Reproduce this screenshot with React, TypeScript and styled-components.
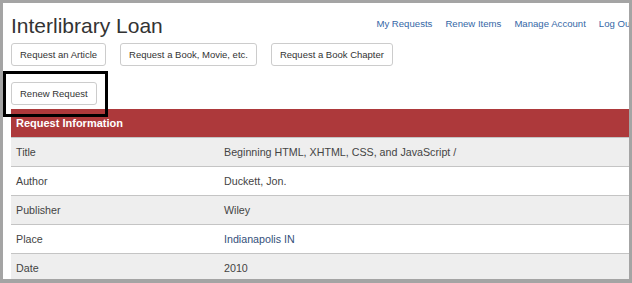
import React from 'react';
import styled, { createGlobalStyle } from 'styled-components';

const GlobalStyle = createGlobalStyle`
  html, body {
    margin: 0;
    padding: 0;
    background: #a4a4a4;
  }
  body {
    font-family: "Liberation Sans", Arial, sans-serif;
  }
`;

const Frame = styled.div`
  position: relative;
  margin: 3px 0 0 3px;
  width: 626px;
  height: 276px;
  background: #fff;
  overflow: hidden;
`;

const Page = styled.div`
  box-sizing: border-box;
  width: 650px;
  padding: 11px 12px 0 8px;
`;

const TopBar = styled.div`
  display: flex;
  align-items: flex-start;
  justify-content: space-between;
`;

const Title = styled.h1`
  margin: 0;
  font-size: 21px;
  line-height: 24px;
  font-weight: normal;
  color: #333;
`;

const Nav = styled.nav`
  display: flex;
  gap: 13px;
  margin-top: 4px;
  margin-right: 8px;
`;

const NavLink = styled.a`
  font-size: 9.6px;
  line-height: 12px;
  color: #3567a6;
  text-decoration: none;
`;

const ButtonRow = styled.div<{ $top: number }>`
  display: flex;
  gap: 14px;
  margin-top: ${(p) => p.$top}px;
`;

const Button = styled.button`
  box-sizing: border-box;
  height: 23px;
  padding: 0 8px;
  background: #fff;
  border: 1px solid #ccc;
  border-radius: 3px;
  font-family: "Liberation Sans", Arial, sans-serif;
  font-size: 9.5px;
  color: #333;
`;

const Table = styled.div`
  margin-top: 4px;
  display: grid;
  grid-template-columns: 208px 1fr;
`;

const HeadCell = styled.div`
  grid-column: 1 / -1;
  height: 28px;
  display: flex;
  align-items: center;
  padding-left: 5px;
  background: #ad393b;
  color: #fff;
  font-size: 11px;
  font-weight: bold;
`;

const Cell = styled.div<{ $shaded: boolean; $link?: boolean }>`
  box-sizing: border-box;
  height: 29px;
  display: flex;
  align-items: center;
  padding: 0 0 0 5px;
  border-top: 1px solid #c4c4c4;
  background: ${(p) => (p.$shaded ? '#eeeeee' : '#fff')};
  color: ${(p) => (p.$link ? '#34507a' : '#444')};
  font-size: 10.7px;
`;

const Highlight = styled.div`
  position: absolute;
  left: 0;
  top: 68px;
  width: 105px;
  height: 46px;
  box-sizing: border-box;
  border: 3px solid #000;
  pointer-events: none;
`;

const rows = [
  { label: 'Title', value: 'Beginning HTML, XHTML, CSS, and JavaScript /' },
  { label: 'Author', value: 'Duckett, Jon.' },
  { label: 'Publisher', value: 'Wiley' },
  { label: 'Place', value: 'Indianapolis IN', link: true },
  { label: 'Date', value: '2010' },
];

const App = () => (
  <>
    <GlobalStyle />
    <Frame>
      <Page>
        <TopBar>
          <Title>Interlibrary Loan</Title>
          <Nav>
            <NavLink href="#">My Requests</NavLink>
            <NavLink href="#">Renew Items</NavLink>
            <NavLink href="#">Manage Account</NavLink>
            <NavLink href="#">Log Out</NavLink>
          </Nav>
        </TopBar>
        <ButtonRow $top={5}>
          <Button>Request an Article</Button>
          <Button>Request a Book, Movie, etc.</Button>
          <Button>Request a Book Chapter</Button>
        </ButtonRow>
        <ButtonRow $top={16}>
          <Button>Renew Request</Button>
        </ButtonRow>
        <Table>
          <HeadCell>Request Information</HeadCell>
          {rows.map((row, i) => (
            <React.Fragment key={row.label}>
              <Cell $shaded={i % 2 === 0}>{row.label}</Cell>
              <Cell $shaded={i % 2 === 0} $link={row.link}>
                {row.value}
              </Cell>
            </React.Fragment>
          ))}
        </Table>
      </Page>
      <Highlight />
    </Frame>
  </>
);

export default App;
